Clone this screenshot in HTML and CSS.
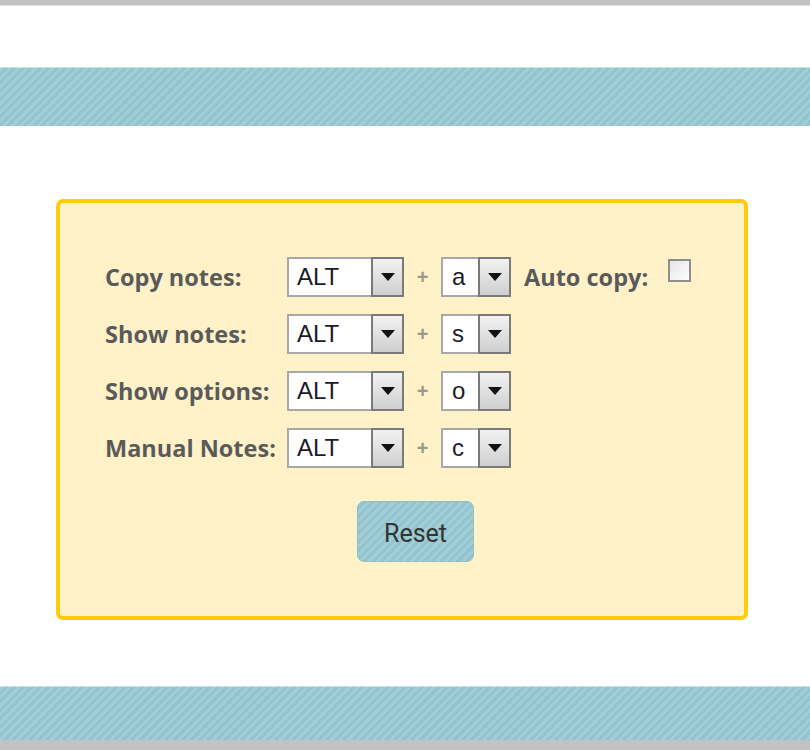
FILE: index.html
```html
<!DOCTYPE html>
<html>
<head>
<meta charset="utf-8">
<link rel="stylesheet" href="styles.css">
</head>
<body>
<div class="topbar"></div>
<div class="band band-top"></div>
<main class="content">
  <section class="panel">
    <div class="grid">
      <label class="lbl">Copy notes:</label>
      <div class="sel sel-wide"><span class="val">ALT</span><span class="btn"><svg width="14" height="8" viewBox="0 0 14 8"><path d="M0 0h14L7 8z" fill="#111"/></svg></span></div>
      <span class="plus">+</span>
      <div class="sel sel-narrow"><span class="val">a</span><span class="btn"><svg width="14" height="8" viewBox="0 0 14 8"><path d="M0 0h14L7 8z" fill="#111"/></svg></span></div>
      <div class="extra"><span class="lbl">Auto copy:</span><span class="check"></span></div>

      <label class="lbl">Show notes:</label>
      <div class="sel sel-wide"><span class="val">ALT</span><span class="btn"><svg width="14" height="8" viewBox="0 0 14 8"><path d="M0 0h14L7 8z" fill="#111"/></svg></span></div>
      <span class="plus">+</span>
      <div class="sel sel-narrow"><span class="val">s</span><span class="btn"><svg width="14" height="8" viewBox="0 0 14 8"><path d="M0 0h14L7 8z" fill="#111"/></svg></span></div>
      <div class="extra"></div>

      <label class="lbl">Show options:</label>
      <div class="sel sel-wide"><span class="val">ALT</span><span class="btn"><svg width="14" height="8" viewBox="0 0 14 8"><path d="M0 0h14L7 8z" fill="#111"/></svg></span></div>
      <span class="plus">+</span>
      <div class="sel sel-narrow"><span class="val">o</span><span class="btn"><svg width="14" height="8" viewBox="0 0 14 8"><path d="M0 0h14L7 8z" fill="#111"/></svg></span></div>
      <div class="extra"></div>

      <label class="lbl">Manual Notes:</label>
      <div class="sel sel-wide"><span class="val">ALT</span><span class="btn"><svg width="14" height="8" viewBox="0 0 14 8"><path d="M0 0h14L7 8z" fill="#111"/></svg></span></div>
      <span class="plus">+</span>
      <div class="sel sel-narrow"><span class="val">c</span><span class="btn"><svg width="14" height="8" viewBox="0 0 14 8"><path d="M0 0h14L7 8z" fill="#111"/></svg></span></div>
      <div class="extra"></div>
    </div>
    <div class="actions">
      <button class="reset">Reset</button>
    </div>
  </section>
</main>
<div class="band band-bottom"></div>
<div class="bottombar"></div>
</body>
</html>
```
FILE: styles.css
```css
html, body {
  margin: 0;
  padding: 0;
  background: #ffffff;
}
body {
  width: 810px;
  height: 750px;
  overflow: hidden;
  display: flex;
  flex-direction: column;
}
.topbar {
  height: 5px;
  background: #c2c2c2;
  border-bottom: 1px solid #e4e4e4;
  margin-bottom: 61px;
}
.band {
  background: repeating-linear-gradient(135deg, #a0ced7 0 3px, #93c4ce 3px 6px);
}
.band-top {
  height: 59px;
  border-top: 1px solid #c6e3e8;
}
.band-bottom {
  height: 53px;
  border-top: 1px solid #c6e3e8;
}
.bottombar {
  height: 10px;
  background: #c2c2c2;
}
.content {
  padding: 73px 0 66px 56px;
}
.panel {
  box-sizing: border-box;
  width: 692px;
  height: 421px;
  border: 4px solid #ffcc0a;
  border-radius: 7px;
  background: #fff2c9;
  padding: 54px 0 0 45px;
}
.grid {
  display: grid;
  grid-template-columns: 182px 117px 37px 70px auto;
  grid-auto-rows: 40px;
  row-gap: 17px;
  align-items: center;
}
.lbl {
  font-family: "Open Sans", "Lato", sans-serif;
  font-weight: 700;
  font-size: 23.5px;
  color: #5a5a5a;
  white-space: nowrap;
}
.sel {
  box-sizing: border-box;
  height: 40px;
  display: flex;
  background: #ffffff;
  border: 2px solid #a8a8a8;
  border-right: none;
}
.val {
  flex: 1;
  font-family: "Liberation Sans", Arial, sans-serif;
  font-size: 24px;
  color: #1b1b2a;
  line-height: 36px;
  padding-left: 8px;
}
.sel-narrow .val { padding-left: 9px; }
.btn {
  box-sizing: border-box;
  width: 33px;
  height: 40px;
  margin-top: -2px;
  border: 2px solid #7a7a7a;
  background: linear-gradient(#f2f2f2, #cfcfcf);
  display: flex;
  align-items: center;
  justify-content: center;
}
.plus {
  text-align: center;
  font-family: "Liberation Sans", Arial, sans-serif;
  font-weight: 700;
  font-size: 20px;
  color: #9a9a88;
}
.extra {
  display: flex;
  align-items: center;
  gap: 20px;
  padding-left: 13px;
}
.check {
  box-sizing: border-box;
  width: 23px;
  height: 23px;
  border: 2px solid #8e8e8e;
  background: linear-gradient(135deg, #e4e4e4, #ffffff);
  margin-top: -14px;
}
.actions {
  padding: 33px 0 0 252px;
}
.reset {
  box-sizing: border-box;
  width: 117px;
  height: 61px;
  border: 1px solid #8fc0ca;
  border-radius: 7px;
  background: repeating-linear-gradient(135deg, #a0ced7 0 3px, #93c4ce 3px 6px);
  font-family: "Roboto", "Liberation Sans", sans-serif;
  font-size: 25px;
  color: #333333;
  padding: 4px 0 0;
}
```
